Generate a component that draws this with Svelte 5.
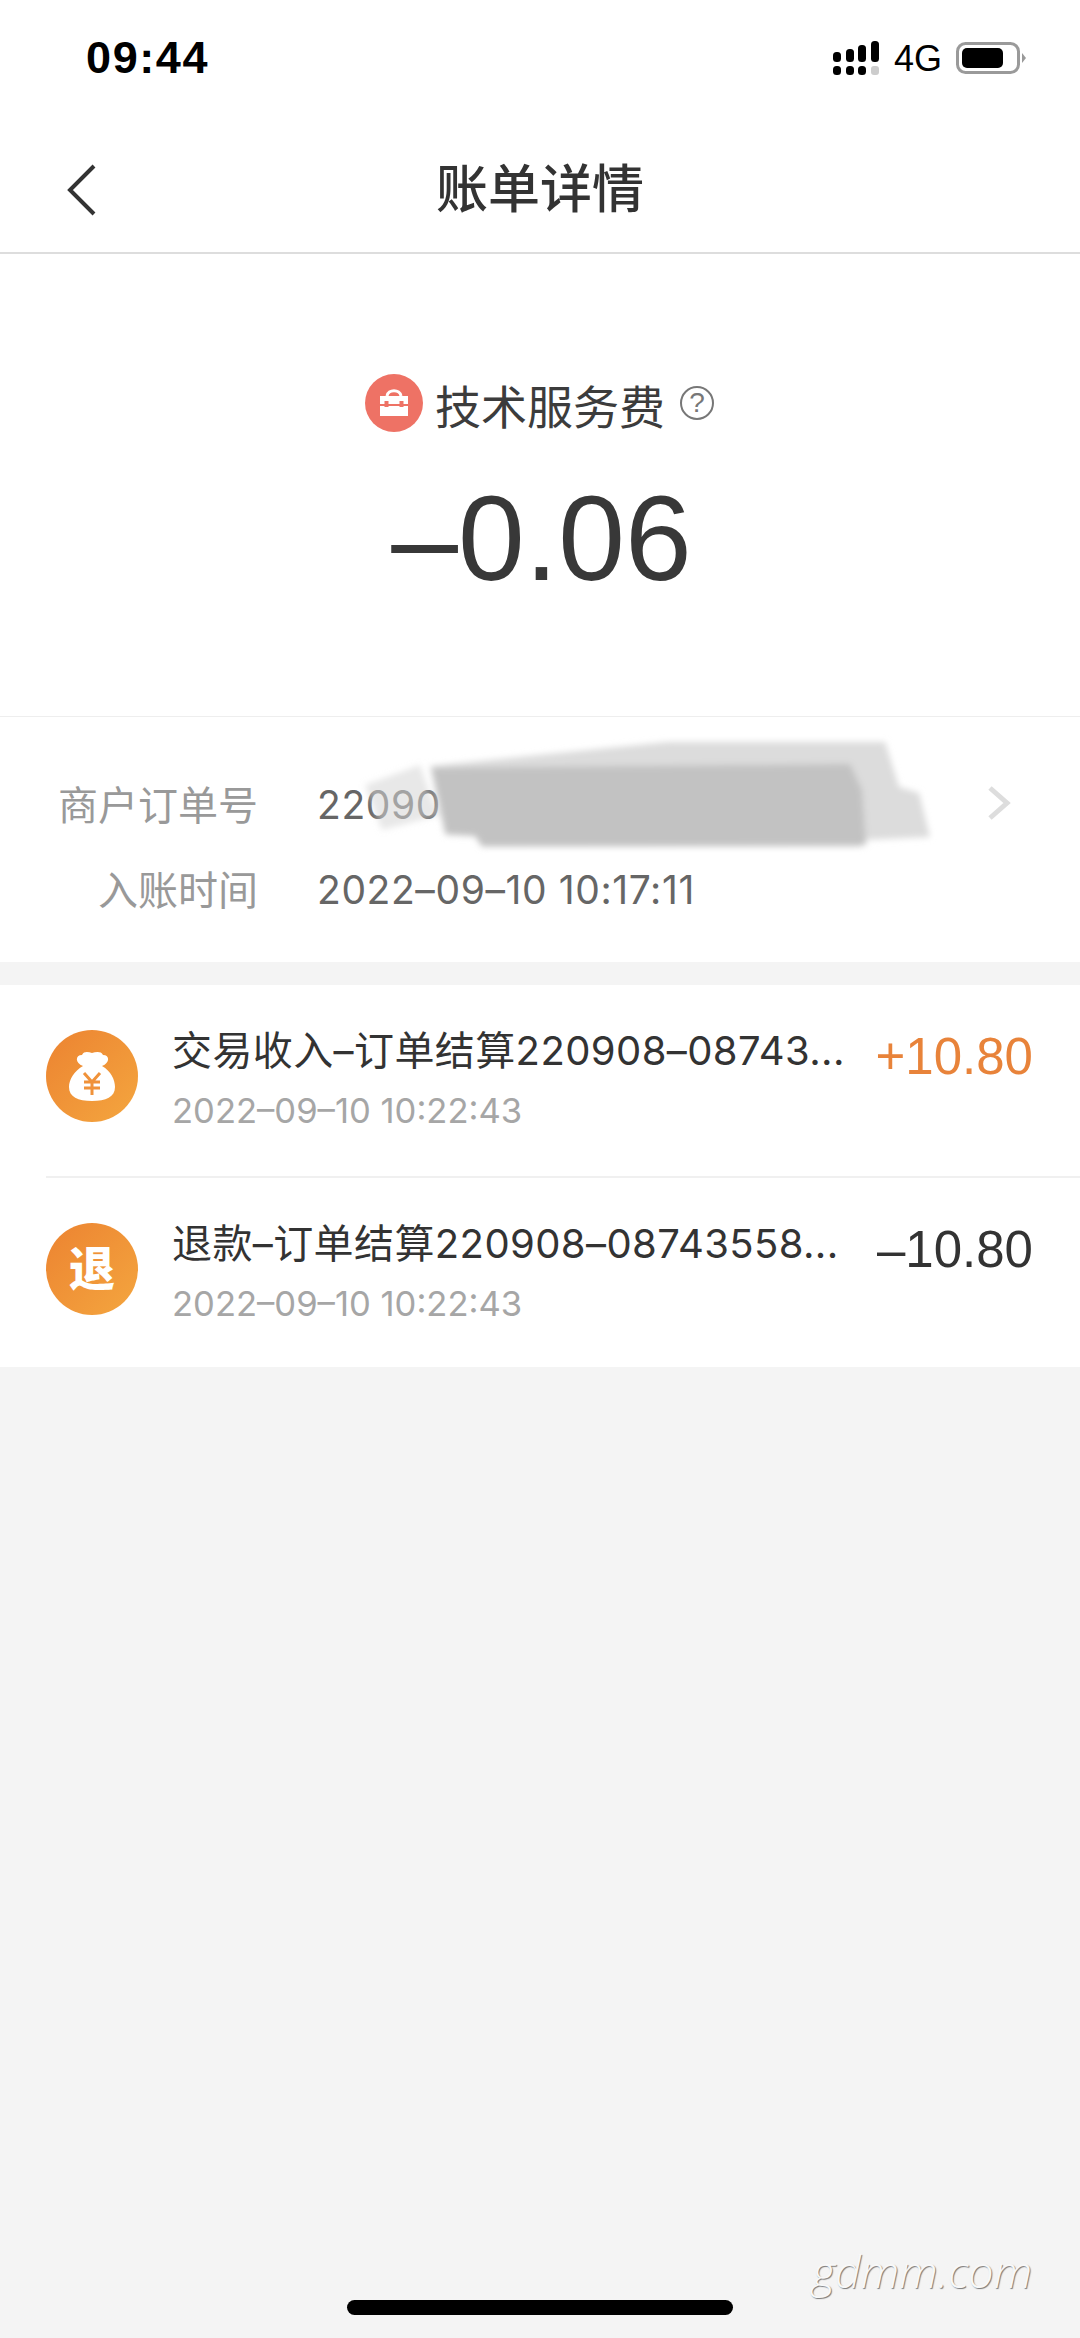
<script lang="ts">
	const details = [
		{ label: '商户订单号', value: '22090', link: true },
		{ label: '入账时间', value: '2022–09–10 10:17:11', link: false }
	];

	const records = [
		{
			kind: 'bag',
			title: '交易收入–订单结算220908–08743...',
			time: '2022–09–10 10:22:43',
			amount: '+10.80',
			income: true
		},
		{
			kind: 'refund',
			title: '退款–订单结算220908–08743558...',
			time: '2022–09–10 10:22:43',
			amount: '–10.80',
			income: false
		}
	];
</script>

<div class="page">
	<div class="status">
		<span class="clock">09:44</span>
		<div class="status-right">
			<svg class="signal" width="46" height="35" viewBox="0 0 46 35">
				<rect x="0" y="11" width="8" height="10" rx="3.5" />
				<rect x="13" y="8" width="8" height="13" rx="3.5" />
				<rect x="25" y="4" width="8" height="17" rx="3.5" />
				<rect x="38" y="0" width="8" height="21" rx="3.5" />
				<rect x="0" y="25" width="8" height="9" rx="3.5" />
				<rect x="13" y="25" width="8" height="9" rx="3.5" />
				<rect x="25" y="25" width="8" height="9" rx="3.5" />
				<rect x="38" y="25" width="8" height="9" rx="3" fill="#ccc" />
			</svg>
			<span class="network">4G</span>
			<svg class="battery" width="70" height="32" viewBox="0 0 70 32">
				<rect x="1.5" y="1.5" width="61" height="29" rx="8" fill="none" stroke="#9a9a9a" stroke-width="3" />
				<rect x="6" y="6" width="41" height="20" rx="5" fill="#000" />
				<path d="M66 11 L70 16 L66 21 Z" fill="#9a9a9a" />
			</svg>
		</div>
	</div>

	<header class="nav">
		<svg class="back" width="30" height="54" viewBox="0 0 30 54">
			<path d="M27 3 L3 27 L27 51" fill="none" stroke="#333" stroke-width="4" />
		</svg>
		<h1>账单详情</h1>
	</header>

	<section class="hero">
		<div class="fee">
			<svg width="58" height="58" viewBox="0 0 58 58">
				<circle cx="29" cy="29" r="29" fill="#ee7265" />
				<path d="M22 22 C23 15 35 15 36 22" fill="none" stroke="#fff" stroke-width="3" />
				<path d="M15 22 H43 V30 H15 Z M15 32 H43 V42 H15 Z" fill="#fff" />
				<rect x="19.5" y="27" width="4" height="6" fill="#ee7265" />
				<rect x="34.5" y="27" width="4" height="6" fill="#ee7265" />
			</svg>
			<span class="fee-name">技术服务费</span>
			<span class="help">?</span>
		</div>
		<div class="total">–0.06</div>
	</section>

	<section class="order">
		{#each details as row}
			<div class="order-row">
				<span class="order-label">{row.label}</span>
				<span class="order-value">{row.value}</span>
				{#if row.link}
					<svg class="more" width="26" height="36" viewBox="0 0 26 36">
						<path d="M4 3 L21 18 L4 33" fill="none" stroke="#ddd" stroke-width="5" />
					</svg>
				{/if}
			</div>
		{/each}
		<svg class="smudge" width="1080" height="245" viewBox="0 717 1080 245">
			<defs>
				<filter id="soft" x="-5%" y="-15%" width="110%" height="130%">
					<feGaussianBlur stdDeviation="3" />
				</filter>
			</defs>
			<g filter="url(#soft)">
				<path d="M365 785 L420 765 L432 800 L440 815 L382 830 Z" fill="#d6d6d6" fill-opacity="0.55" />
				<path d="M430 766 L668 742 L885 742 L899 787 L919 793 L930 837 L861 840 L861 847 L482 847 L475 836 L445 835 Z" fill="#dcdcdc" />
				<path d="M432 768 L850 764 L862 790 L866 845 L482 846 L475 836 L446 834 Z" fill="#c2c2c2" />
			</g>
		</svg>
	</section>

	<section class="records">
		{#each records as item}
			<div class="record">
				<div class="record-icon">
					{#if item.kind === 'bag'}
						<svg width="92" height="92" viewBox="0 0 92 92">
							<path d="M37 36 C29 33 29 25 36 25 C38 21 42 22 46 23 C50 22 55 21 57 25 C64 25 64 33 56 36 C65 41 69 50 69 57 C69 67 60 71 46 71 C32 71 23 67 23 57 C23 50 28 41 37 36 Z" fill="#fff" />
							<path d="M38 43 L46 52 L54 43 M38 52 H54 M38 58 H54 M46 52 V65" fill="none" stroke="#f0923a" stroke-width="3" />
						</svg>
					{:else}
						<span class="refund">退</span>
					{/if}
				</div>
				<div class="record-text">
					<div class="record-title">{item.title}</div>
					<div class="record-time">{item.time}</div>
				</div>
				<div class="record-amount" class:income={item.income}>{item.amount}</div>
			</div>
		{/each}
	</section>

	<div class="bottom">
		<span class="watermark">gdmm.com</span>
		<div class="home-bar"></div>
	</div>
</div>

<style>
	:global(body) {
		background: #f4f4f4;
	}
	.page {
		height: 2338px;
		display: flex;
		flex-direction: column;
		font-family: 'Liberation Sans', 'Noto Sans CJK SC', sans-serif;
		color: #333;
	}

	.status {
		height: 126px;
		box-sizing: border-box;
		background: #fff;
		padding: 33px 54px 0 86px;
		display: flex;
		justify-content: space-between;
		align-items: flex-start;
	}
	.clock {
		font-size: 45px;
		line-height: 50px;
		font-weight: 700;
		letter-spacing: 1.6px;
		color: #000;
	}
	.status-right {
		display: flex;
		align-items: center;
		padding-top: 6px;
	}
	.signal {
		fill: #000;
	}
	.network {
		font-size: 36px;
		line-height: 36px;
		color: #000;
		margin: 2px 14px 0 15px;
	}

	.nav {
		height: 128px;
		box-sizing: border-box;
		background: #fff;
		border-bottom: 2px solid #ddd;
		display: flex;
		align-items: center;
		justify-content: center;
		position: relative;
	}
	.nav h1 {
		margin: 2px 0 0;
		font-size: 52px;
		line-height: 124px;
		font-weight: 500;
		color: #333;
	}
	.back {
		position: absolute;
		left: 67px;
		top: 37px;
	}

	.hero {
		height: 463px;
		box-sizing: border-box;
		background: #fff;
		border-bottom: 1px solid #eee;
		padding-top: 120px;
		display: flex;
		flex-direction: column;
		align-items: center;
	}
	.fee {
		display: flex;
		align-items: center;
		height: 58px;
		margin-right: 1px;
	}
	.fee-name {
		font-size: 46px;
		line-height: 58px;
		margin: 9px 0 0 12px;
		color: #3c3c3c;
	}
	.help {
		width: 30px;
		height: 30px;
		border: 2px solid #777;
		border-radius: 50%;
		margin-left: 15px;
		font-size: 28px;
		line-height: 30px;
		text-align: center;
		color: #777;
	}
	.total {
		font-size: 120px;
		line-height: 120px;
		margin: 46px 0 0 3px;
		color: #383838;
	}

	.order {
		position: relative;
		background: #fff;
		height: 245px;
		box-sizing: border-box;
		padding: 43px 68px 0 0;
		overflow: hidden;
	}
	.order-row {
		display: flex;
		align-items: center;
		height: 85px;
	}
	.order-label {
		width: 258px;
		text-align: right;
		font-size: 40px;
		color: #999;
	}
	.order-value {
		flex: 1;
		margin-left: 59px;
		margin-top: 3px;
		font-family: 'Inter', 'Noto Sans CJK SC', sans-serif;
		font-size: 39px;
		letter-spacing: 0.6px;
		color: #666;
	}
	.smudge {
		position: absolute;
		left: 0;
		top: 0;
	}

	.records {
		margin-top: 23px;
		background: #fff;
		padding-left: 46px;
	}
	.record {
		height: 193px;
		box-sizing: border-box;
		padding: 45px 47px 0 0;
		display: flex;
		align-items: flex-start;
		border-bottom: 2px solid #f0f0f0;
	}
	.record:last-child {
		height: 189px;
		border-bottom: none;
	}
	.record-icon {
		width: 92px;
		height: 92px;
		flex-shrink: 0;
		border-radius: 50%;
		background: linear-gradient(135deg, #ec8331, #f4a63f);
		display: flex;
		align-items: center;
		justify-content: center;
	}
	.refund {
		font-size: 46px;
		line-height: 46px;
		font-weight: 900;
		color: #fff;
	}
	.record-text {
		flex: 1;
		margin-left: 34px;
		min-width: 0;
		margin-top: -2px;
	}
	.record-title {
		font-family: 'Inter', 'Noto Sans CJK SC', sans-serif;
		font-size: 40px;
		letter-spacing: 0.4px;
		line-height: 46px;
		white-space: nowrap;
		color: #333;
	}
	.record-time {
		font-family: 'Inter', 'Noto Sans CJK SC', sans-serif;
		font-size: 34.6px;
		line-height: 40px;
		margin-top: 16px;
		color: #a6a6a6;
	}
	.record-amount {
		font-size: 51px;
		line-height: 54px;
		color: #333;
	}
	.record-amount.income {
		color: #e8833a;
	}

	.bottom {
		flex: 1;
		position: relative;
		display: flex;
		justify-content: center;
		align-items: flex-end;
		padding-bottom: 23px;
	}
	.home-bar {
		width: 386px;
		height: 15px;
		border-radius: 8px;
		background: #000;
	}
	.watermark {
		position: absolute;
		left: 812px;
		bottom: 42px;
		font-family: 'Open Sans', sans-serif;
		font-style: italic;
		font-weight: 300;
		font-size: 45px;
		line-height: 50px;
		color: #f8f8f8;
		text-shadow: 1px 1px 1px #777;
	}
</style>
